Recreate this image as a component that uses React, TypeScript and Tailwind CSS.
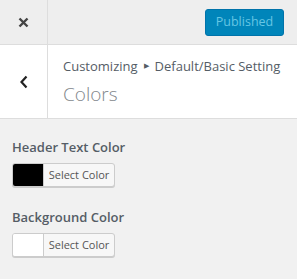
const font = { fontFamily: '"Open Sans", "Noto Sans", sans-serif' };

const ColorControl = ({ label, swatch }: { label: string; swatch: string }) => (
  <div className="flex flex-col">
    <span className="text-[13px] leading-[20px] font-semibold text-[#555d66]">
      {label}
    </span>
    <button className="mt-[6px] flex h-[24px] w-[103px] items-stretch overflow-hidden rounded-[3px] border border-[#cccccc] bg-[#f7f7f7] shadow-[0_1px_0_#cccccc]">
      <span className={`w-[31px] border-r border-[#cccccc] ${swatch}`} />
      <span className="flex flex-1 items-center justify-center text-[11px] text-[#555555]">
        Select Color
      </span>
    </button>
  </div>
);

export default function App() {
  return (
    <div
      className="flex h-[279px] w-[297px] flex-col bg-[#f1f1f1]"
      style={font}
    >
      <div className="flex h-[45px] border-b border-[#dddddd] bg-[#eeeeee]">
        <div className="flex w-[48px] items-center justify-center border-r border-[#dddddd]">
          <svg width="11" height="11" viewBox="0 0 11 11">
            <path
              d="M1.5 1.5 L9.5 9.5 M9.5 1.5 L1.5 9.5"
              stroke="#444"
              strokeWidth="2.4"
            />
          </svg>
        </div>
        <div className="flex flex-1 items-center justify-end pr-[13px] pt-[1px]">
          <button className="h-[27px] w-[79px] rounded-[3px] border border-[#0073aa] bg-[#0085ba] text-[12.5px] text-[#66c6e4]">
            Published
          </button>
        </div>
      </div>
      <div className="flex h-[74px] border-b border-[#dddddd] bg-white">
        <div className="flex w-[48px] items-center justify-center border-r border-[#dddddd]">
          <svg width="10" height="14" viewBox="0 0 10 14">
            <path d="M7.5 1.5 L2.5 7 L7.5 12.5" fill="none" stroke="#222" strokeWidth="2.2" />
          </svg>
        </div>
        <div className="flex flex-col pl-[15px] pt-[12px]">
          <span className="flex items-center text-[13px] leading-[18px] text-[#555d66]">
            Customizing
            <span className="mx-[6px] text-[7px] text-[#555d66]">▶</span>
            Default/Basic Setting
          </span>
          <span className="mt-[5px] text-[19px] leading-[28px] font-light text-[#82878c]">
            Colors
          </span>
        </div>
      </div>
      <div className="flex flex-col gap-[20px] px-[12px] pt-[18px]">
        <ColorControl label="Header Text Color" swatch="bg-black" />
        <ColorControl label="Background Color" swatch="bg-white" />
      </div>
    </div>
  );
}
